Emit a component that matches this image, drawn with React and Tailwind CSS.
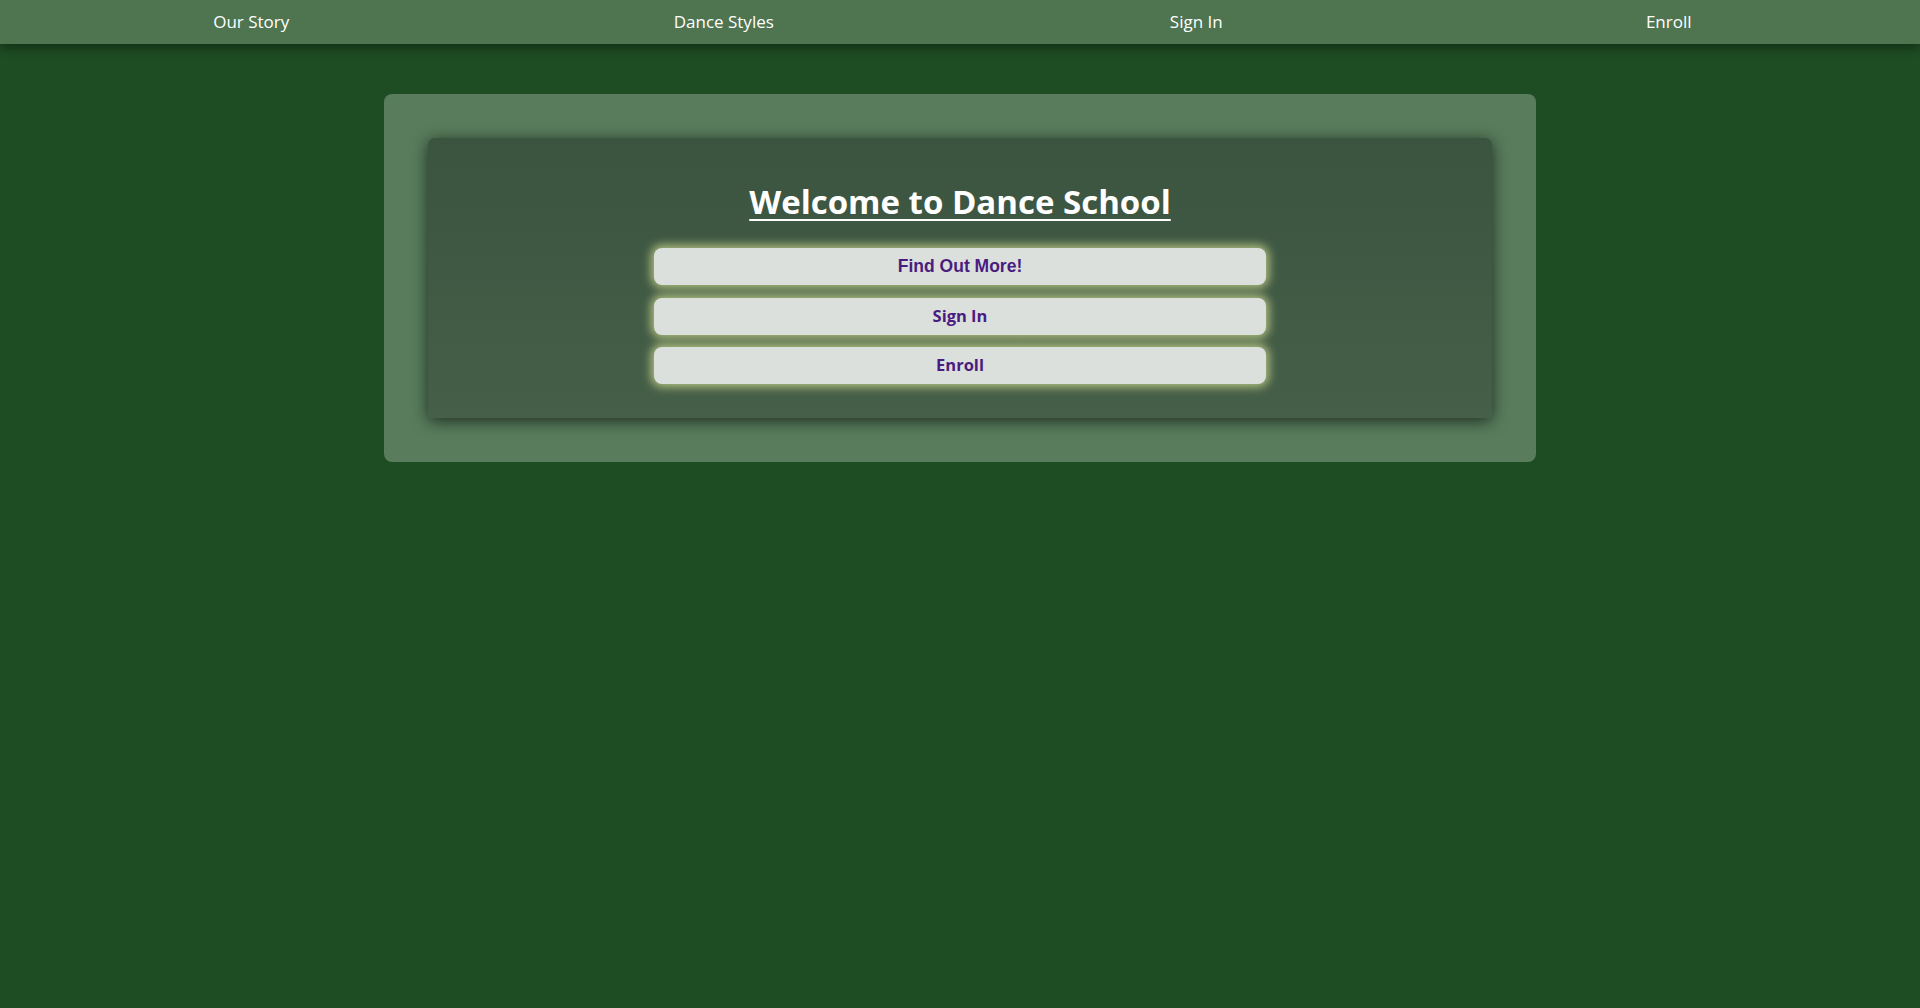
const NAV_LINKS = ['Our Story', 'Dance Styles', 'Sign In', 'Enroll']

// ── Top nav ─────────────────────────────────────────────────────────
function Navbar() {
  return (
    <nav className="relative z-10 h-[44px] bg-[#4e7450] shadow-[0_4px_10px_rgba(0,0,0,0.4)] px-[15px] flex items-center">
      {NAV_LINKS.map((link) => (
        <a
          key={link}
          href="#"
          className="flex-1 text-center text-white text-[17px] font-['Open_Sans',sans-serif]"
        >
          {link}
        </a>
      ))}
    </nav>
  )
}

function GlowButton({ children, arial }) {
  return (
    <button
      className={`w-[612px] h-[37px] rounded-lg bg-[#dbe0dc] text-[#4a1c80] font-bold shadow-[0_0_10px_3px_rgba(214,226,150,0.75)] ${
        arial ? "text-[17.5px] font-['Liberation_Sans',sans-serif]" : "text-[16.5px] font-['Open_Sans',sans-serif]"
      }`}
    >
      {children}
    </button>
  )
}

export default function App() {
  return (
    <div className="min-h-screen bg-[#1e4d23]">
      <Navbar />

      <main className="pt-[50px] flex justify-center">
        {/* Outer frame */}
        <div className="w-[1152px] rounded-lg bg-[#587c5c] p-[44px]">
          {/* Inner card */}
          <div className="h-[280px] rounded-md bg-gradient-to-b from-[#3b5440] to-[#465f48] shadow-[0_3px_16px_rgba(0,0,0,0.65)] pt-[45px] flex flex-col items-center">
            <h1 className="text-white text-[33px] font-bold leading-[38px] underline underline-offset-[5px] decoration-2 font-['Open_Sans',sans-serif] mb-[27px]">
              Welcome to Dance School
            </h1>
            <div className="flex flex-col gap-[12.5px]">
              <GlowButton arial>Find Out More!</GlowButton>
              <GlowButton>Sign In</GlowButton>
              <GlowButton>Enroll</GlowButton>
            </div>
          </div>
        </div>
      </main>
    </div>
  )
}
